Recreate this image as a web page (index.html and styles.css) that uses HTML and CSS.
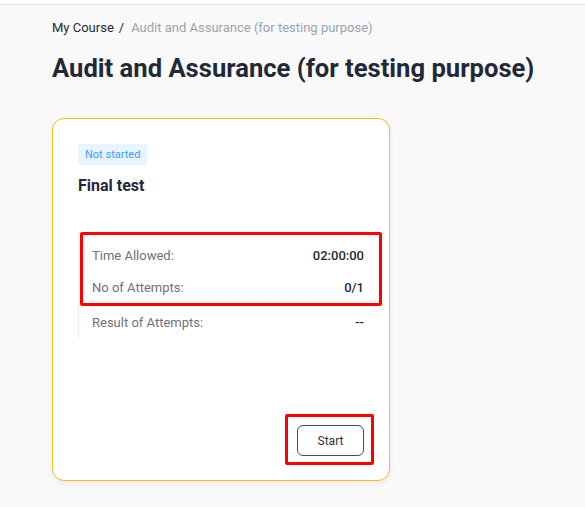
FILE: index.html
```html
<!DOCTYPE html>
<html>
<head>
<meta charset="utf-8">
<link rel="stylesheet" href="styles.css">
</head>
<body>
<div class="topbar"></div>
<main class="page">
  <nav class="crumbs">
    <span class="crumb-link">My Course</span>
    <span class="crumb-sep">/</span>
    <span class="crumb-current">Audit and Assurance (for testing purpose)</span>
  </nav>
  <h1 class="title">Audit and Assurance (for testing purpose)</h1>
  <section class="card">
    <span class="badge">Not started</span>
    <h2 class="card-title">Final test</h2>
    <div class="info">
      <div class="info-main">
        <div class="row"><span class="label">Time Allowed:</span><span class="value">02:00:00</span></div>
        <div class="row"><span class="label">No of Attempts:</span><span class="value">0/1</span></div>
      </div>
      <div class="row"><span class="label">Result of Attempts:</span><span class="value">--</span></div>
    </div>
    <div class="actions">
      <div class="mark">
        <button class="btn">Start</button>
      </div>
    </div>
  </section>
</main>
</body>
</html>
```

FILE: styles.css
```css
* { box-sizing: border-box; }
html, body { margin: 0; padding: 0; }
body {
  background: #f9f9f9;
  font-family: Roboto, "Liberation Sans", Arial, sans-serif;
  color: #1f2937;
  height: 507px;
  overflow: hidden;
}
.topbar {
  height: 5px;
  background: #ffffff;
  border-bottom: 1px solid #e3e3e3;
}
.page {
  padding: 14px 0 0 52px;
}
.crumbs {
  font-size: 13px;
  line-height: 18px;
  display: flex;
  white-space: nowrap;
}
.crumb-link { color: #1f2937; }
.crumb-sep { color: #1f2937; margin: 0 7px 0 5px; }
.crumb-current { color: #9ca3af; }
.title {
  margin: 15px 0 0;
  font-size: 25.6px;
  line-height: 32px;
  font-weight: 700;
  color: #1f2937;
  white-space: nowrap;
}
.card {
  margin-top: 34px;
  width: 338px;
  height: 363px;
  background: #fff;
  border: 1px solid #f9b91a;
  border-radius: 12px;
  box-shadow: 0 2px 6px rgba(0,0,0,0.06);
  padding: 25px 25px 24px;
  display: flex;
  flex-direction: column;
  align-items: flex-start;
}
.badge {
  display: inline-block;
  background: #e8f4ff;
  color: #3ba1f2;
  font-size: 11px;
  line-height: 21px;
  padding: 0 7px;
  border-radius: 3px;
}
.card-title {
  margin: 11px 0 0;
  font-size: 16px;
  line-height: 20px;
  font-weight: 700;
  color: #1f2937;
}
.info {
  margin-top: 36px;
  align-self: stretch;
  border-left: 1px solid #ececec;
}
.info-main {
  position: relative;
  padding: 7px 0 3px;
}
.info-main::after {
  content: "";
  position: absolute;
  left: 1px;
  right: -18px;
  top: 0;
  bottom: 0;
  border: 3px solid #ff0000;
  border-radius: 2px;
}
.row {
  display: flex;
  justify-content: space-between;
  align-items: center;
  height: 32px;
  padding-left: 13px;
  font-size: 13px;
}
.label { color: #6b7280; }
.value { color: #1f2937; font-weight: 500; }
.actions {
  margin-top: auto;
  align-self: stretch;
  display: flex;
  justify-content: flex-end;
}
.mark {
  border: 3px solid #ff0000;
  border-radius: 2px;
  padding: 8px 7px 6px 9px;
  margin-right: -10px;
  margin-bottom: -9px;
}
.btn {
  display: block;
  width: 67px;
  height: 31px;
  background: #fff;
  border: 1px solid #4b4b4b;
  border-radius: 6px;
  font-family: Roboto, "Liberation Sans", Arial, sans-serif;
  font-size: 12px;
  color: #333;
  padding: 0;
}
```
